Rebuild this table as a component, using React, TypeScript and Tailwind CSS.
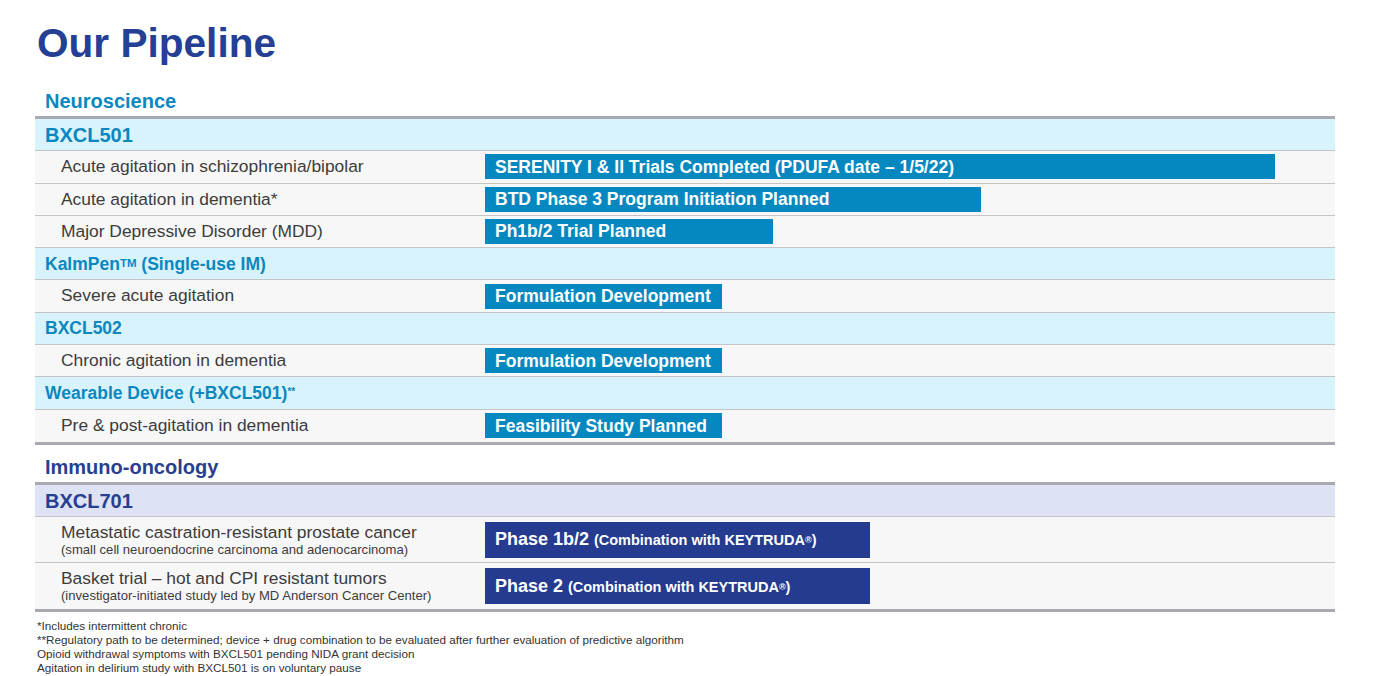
import React from "react";

type Row =
  | { kind: "group"; label: React.ReactNode; tone: "cyan" | "navy" }
  | { kind: "item"; label: string; sub?: string; bar: React.ReactNode; width: number; tone: "cyan" | "navy"; tall?: boolean };

const neuro: Row[] = [
  { kind: "group", label: "BXCL501", tone: "cyan" },
  { kind: "item", label: "Acute agitation in schizophrenia/bipolar", bar: "SERENITY I & II Trials Completed (PDUFA date – 1/5/22)", width: 790, tone: "cyan" },
  { kind: "item", label: "Acute agitation in dementia*", bar: "BTD Phase 3 Program Initiation Planned", width: 496, tone: "cyan" },
  { kind: "item", label: "Major Depressive Disorder (MDD)", bar: "Ph1b/2 Trial Planned", width: 288, tone: "cyan" },
  {
    kind: "group",
    tone: "cyan",
    label: (
      <span className="text-[17.5px]">
        KalmPen<sup className="text-[11.5px] relative -top-[3px]">TM</sup> (Single-use IM)
      </span>
    ),
  },
  { kind: "item", label: "Severe acute agitation", bar: "Formulation Development", width: 237, tone: "cyan" },
  { kind: "group", label: <span className="text-[17.5px]">BXCL502</span>, tone: "cyan" },
  { kind: "item", label: "Chronic agitation in dementia", bar: "Formulation Development", width: 237, tone: "cyan" },
  {
    kind: "group",
    tone: "cyan",
    label: (
      <span className="text-[17.5px]">
        Wearable Device (+BXCL501)<sup className="text-[10px] relative -top-[4px]">**</sup>
      </span>
    ),
  },
  { kind: "item", label: "Pre & post-agitation in dementia", bar: "Feasibility Study Planned", width: 237, tone: "cyan" },
];

function Keytruda({ phase }: { phase: string }) {
  return (
    <span>
      <span className="text-[18px]">{phase}</span>{" "}
      <span className="text-[14.5px]">
        (Combination with KEYTRUDA<sup className="text-[9px] relative -top-[2px]">®</sup>)
      </span>
    </span>
  );
}

const immuno: Row[] = [
  { kind: "group", label: "BXCL701", tone: "navy" },
  {
    kind: "item",
    label: "Metastatic castration-resistant prostate cancer",
    sub: "(small cell neuroendocrine carcinoma and adenocarcinoma)",
    bar: <Keytruda phase="Phase 1b/2" />,
    width: 385,
    tone: "navy",
    tall: true,
  },
  {
    kind: "item",
    label: "Basket trial – hot and CPI resistant tumors",
    sub: "(investigator-initiated study led by MD Anderson Cancer Center)",
    bar: <Keytruda phase="Phase 2" />,
    width: 385,
    tone: "navy",
    tall: true,
  },
];

function TableRow({ row, last }: { row: Row; last: boolean }) {
  const border = last ? "" : "border-b border-[#c4c4c4]";
  if (row.kind === "group") {
    return (
      <div
        className={`h-[32.3px] flex items-center pl-[10px] font-bold text-[20px] ${border} ${
          row.tone === "cyan" ? "bg-[#d8f3fc] text-[#0b87c0]" : "bg-[#dde3f4] text-[#263f8e]"
        }`}
      >
        {row.label}
      </div>
    );
  }
  return (
    <div className={`flex items-center bg-[#f7f7f7] ${row.tall ? "h-[46px]" : "h-[32.3px]"} ${border}`}>
      <div className="w-[450px] pl-[26px] text-[#3c3c3c] leading-none">
        <div className="text-[17.4px]">{row.label}</div>
        {row.sub && <div className="text-[13.1px] mt-[2px]">{row.sub}</div>}
      </div>
      <div
        className={`flex items-center pl-[10px] text-white font-bold text-[17.5px] ${
          row.tall ? "h-[36px] bg-[#243b8f]" : "h-[25px] bg-[#0588bf]"
        }`}
        style={{ width: row.width }}
      >
        {row.bar}
      </div>
    </div>
  );
}

function Section({ title, color, rows }: { title: string; color: string; rows: Row[] }) {
  return (
    <div>
      <div className={`pl-[10px] text-[20px] leading-[20px] font-bold ${color}`}>{title}</div>
      <div className="mt-[5px] border-t-[3px] border-b-[3px] border-[#a9a9b1]">
        {rows.map((r, i) => (
          <TableRow key={i} row={r} last={i === rows.length - 1} />
        ))}
      </div>
    </div>
  );
}

export default function App() {
  return (
    <div className="w-[1373px] h-[676px] bg-white overflow-hidden font-['Liberation_Sans',Arial,sans-serif]">
      <h1 className="pl-[37px] pt-[23px] text-[40.6px] leading-[40px] font-bold text-[#243f94]">Our Pipeline</h1>

      <div className="ml-[35px] w-[1300px] mt-[28px]">
        <Section title="Neuroscience" color="text-[#0b87c0]" rows={neuro} />
        <div className="mt-[12px]">
          <Section title="Immuno-oncology" color="text-[#283f8f]" rows={immuno} />
        </div>
      </div>

      <div className="pl-[37px] mt-[7px] text-[11.7px] leading-[14px] text-[#333]">
        <p>*Includes intermittent chronic</p>
        <p>**Regulatory path to be determined; device + drug combination to be evaluated after further evaluation of predictive algorithm</p>
        <p>Opioid withdrawal symptoms with BXCL501 pending NIDA grant decision</p>
        <p>Agitation in delirium study with BXCL501 is on voluntary pause</p>
      </div>
    </div>
  );
}
